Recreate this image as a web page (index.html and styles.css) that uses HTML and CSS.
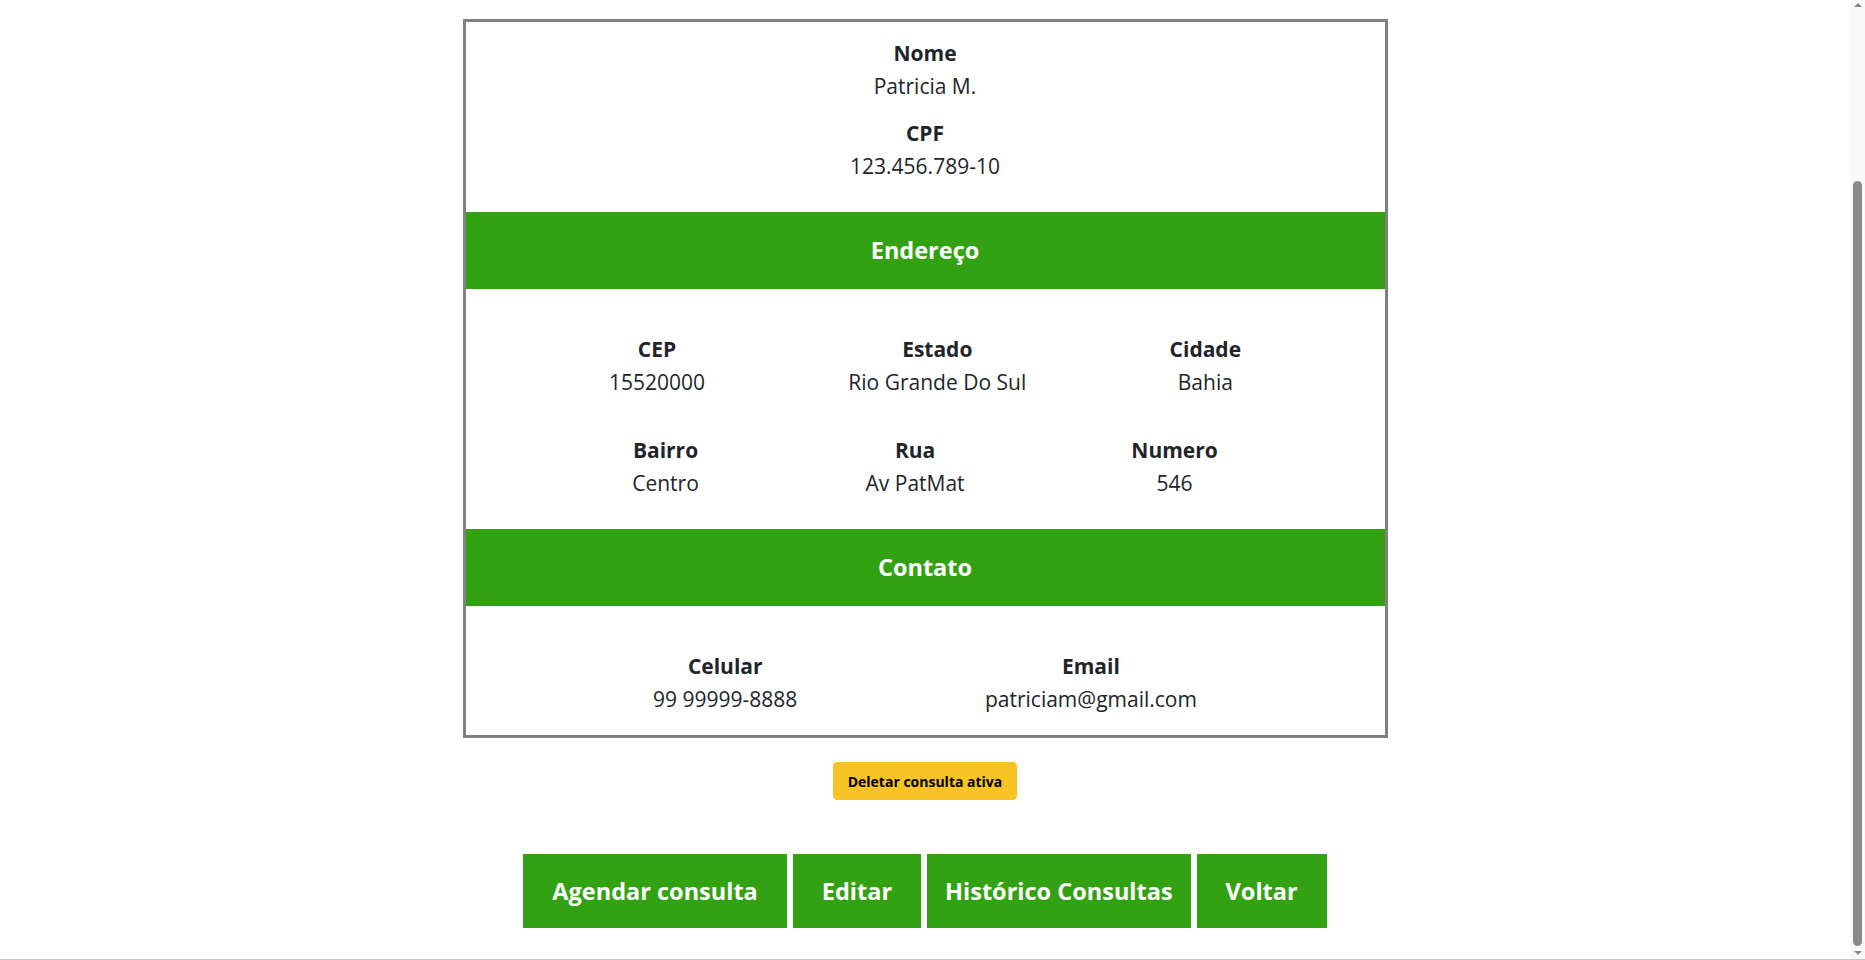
FILE: index.html
```html
<!DOCTYPE html>
<html lang="pt-BR">
<head>
<meta charset="utf-8">
<title>Paciente</title>
<link rel="stylesheet" href="styles.css">
</head>
<body>
<div class="viewport">
  <main class="page">
    <section class="card">
      <div class="identity">
        <div class="field">
          <div class="label">Nome</div>
          <div class="value">Patricia M.</div>
        </div>
        <div class="field">
          <div class="label">CPF</div>
          <div class="value">123.456.789-10</div>
        </div>
      </div>
      <h4 class="band">Endereço</h4>
      <div class="address">
        <div class="row">
          <div class="field"><div class="label">CEP</div><div class="value">15520000</div></div>
          <div class="field"><div class="label">Estado</div><div class="value">Rio Grande Do Sul</div></div>
          <div class="field"><div class="label">Cidade</div><div class="value">Bahia</div></div>
        </div>
        <div class="row">
          <div class="field"><div class="label">Bairro</div><div class="value">Centro</div></div>
          <div class="field"><div class="label">Rua</div><div class="value">Av PatMat</div></div>
          <div class="field"><div class="label">Numero</div><div class="value">546</div></div>
        </div>
      </div>
      <h4 class="band">Contato</h4>
      <div class="contact">
        <div class="row">
          <div class="field"><div class="label">Celular</div><div class="value">99 99999-8888</div></div>
          <div class="field"><div class="label">Email</div><div class="value">patriciam@gmail.com</div></div>
        </div>
      </div>
    </section>
    <button class="btn-delete" type="button">Deletar consulta ativa</button>
    <nav class="actions">
      <button class="btn-action" type="button">Agendar consulta</button>
      <button class="btn-action" type="button">Editar</button>
      <button class="btn-action btn-tight" type="button">Histórico Consultas</button>
      <button class="btn-action" type="button">Voltar</button>
    </nav>
  </main>
  <div class="scrollbar">
    <span class="arrow-up"></span>
    <span class="thumb"></span>
    <span class="arrow-down"></span>
  </div>
</div>
</body>
</html>
```
FILE: styles.css
```css
html, body {
  margin: 0;
  padding: 0;
}
body {
  height: 960px;
  box-sizing: border-box;
  overflow: hidden;
  background: #ffffff;
  color: #212529;
  font-family: "Open Sans", "Noto Sans", sans-serif;
  border-bottom: 1px solid #c9c1c9;
}
.viewport {
  display: flex;
  height: 959px;
}
.page {
  flex: 1;
  display: flex;
  flex-direction: column;
  align-items: center;
  padding-top: 19px;
}
.card {
  width: 925px;
  box-sizing: border-box;
  border: 3px solid #808080;
  background: #fff;
}
.field {
  text-align: center;
  font-size: 21px;
  line-height: 32.5px;
}
.label {
  font-weight: 700;
}
.identity {
  padding: 15px 0 30px;
  display: flex;
  flex-direction: column;
  gap: 15px;
}
.band {
  margin: 0;
  background: #33a212;
  color: #fff;
  text-align: center;
  font-size: 23.5px;
  font-weight: 700;
  line-height: 29px;
  padding: 24px 0;
}
.address {
  padding: 44px 0 30px;
  display: flex;
  flex-direction: column;
  gap: 36px;
}
.row {
  display: flex;
  justify-content: space-evenly;
}
.contact {
  padding: 44px 0 20px;
}
.btn-delete {
  margin-top: 24px;
  height: 38px;
  padding: 0 14px;
  border: 1px solid #f6c12a;
  border-radius: 4px;
  background: #f7c325;
  color: #000;
  font-family: "Open Sans", "Noto Sans", sans-serif;
  font-size: 14px;
  font-weight: 700;
}
.actions {
  margin-top: 54px;
  display: flex;
  gap: 6px;
}
.btn-action {
  border: 0;
  background: #33a212;
  color: #fff;
  font-family: "Open Sans", "Noto Sans", sans-serif;
  font-size: 23.5px;
  font-weight: 700;
  line-height: 38px;
  padding: 18px 29px;
}
.btn-tight {
  padding-left: 18px;
  padding-right: 18px;
}
.scrollbar {
  width: 15px;
  background: #f9f9f9;
  display: flex;
  flex-direction: column;
  align-items: center;
}
.arrow-up {
  margin-top: 3px;
  width: 0;
  height: 0;
  border-left: 4px solid transparent;
  border-right: 4px solid transparent;
  border-bottom: 4px solid #8a8a8a;
}
.thumb {
  margin-top: 174px;
  width: 9px;
  height: 765px;
  border-radius: 5px;
  background: #8a8a8a;
}
.arrow-down {
  margin-top: auto;
  margin-bottom: 4px;
  width: 0;
  height: 0;
  border-left: 4px solid transparent;
  border-right: 4px solid transparent;
  border-top: 4px solid #8a8a8a;
}
```
